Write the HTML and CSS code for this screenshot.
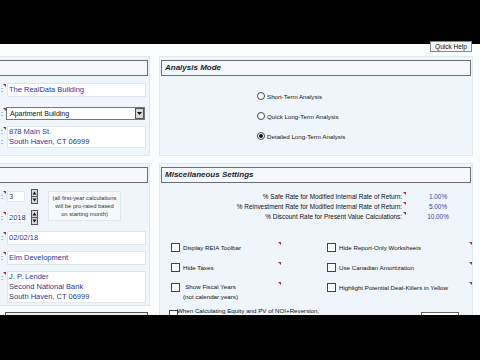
FILE: index.html
```html
<!DOCTYPE html>
<html>
<head>
<meta charset="utf-8">
<title>Settings</title>
<link rel="stylesheet" href="styles.css">
</head>
<body>
<div class="screen">
  <div class="bar bar-top"></div>
  <button class="quick-help">Quick Help</button>
  <main class="main">
    <div class="col col-left">
      <section class="panel panel-a">
        <div class="panel-head"></div>
        <div class="row row-name"><span class="lbl">:</span><div class="field">The RealData Building</div></div>
        <div class="row row-type"><span class="lbl">:</span>
          <div class="select"><span class="select-text">Apartment Building</span>
            <span class="select-btn"><svg width="9" height="11" viewBox="0 0 9 11"><rect x="0.5" y="0.5" width="8" height="10" fill="#d6d6d6" stroke="#555"/><path d="M2 4h5L4.5 7z" fill="#111"/></svg></span>
          </div>
        </div>
        <div class="row row-addr"><span class="lbl lbl-2">:<br>:</span><div class="field field-2">878 Main St.<br>South Haven, CT 06999</div></div>
      </section>
      <section class="panel panel-b">
        <div class="panel-head"></div>
        <div class="start">
          <div class="start-inputs">
            <div class="row row-num"><span class="lbl">:</span><span class="num">3</span>
              <span class="spin"><svg width="7" height="15" viewBox="0 0 7 15"><rect x="0.5" y="0.5" width="6" height="14" fill="#dadada" stroke="#555"/><line x1="0.5" y1="7.5" x2="6.5" y2="7.5" stroke="#555"/><path d="M1.5 5.5h4L3.5 2.5z M1.5 9.5h4L3.5 12.5z" fill="#111"/></svg></span>
            </div>
            <div class="row row-num"><span class="lbl">:</span><span class="num">2018</span>
              <span class="spin"><svg width="7" height="15" viewBox="0 0 7 15"><rect x="0.5" y="0.5" width="6" height="14" fill="#dadada" stroke="#555"/><line x1="0.5" y1="7.5" x2="6.5" y2="7.5" stroke="#555"/><path d="M1.5 5.5h4L3.5 2.5z M1.5 9.5h4L3.5 12.5z" fill="#111"/></svg></span>
            </div>
          </div>
          <div class="note">(all first-year calculations<br>will be pro-rated based<br>on starting month)</div>
        </div>
        <div class="row row-gap"><span class="lbl">:</span><div class="field">02/02/18</div></div>
        <div class="row row-gap"><span class="lbl">:</span><div class="field">Elm Development</div></div>
        <div class="row row-gap"><span class="lbl">:</span><div class="field field-3">J. P. Lender<br>Second National Bank<br>South Haven, CT 06999</div></div>
      </section>
      <div class="next-head"></div>
    </div>

    <div class="col col-right">
      <section class="panel panel-a">
        <div class="panel-head"><h2>Analysis Mode</h2></div>
        <div class="radios">
          <div class="radio"><span class="dot"></span><span>Short-Term Analysis</span></div>
          <div class="radio"><span class="dot"></span><span>Quick Long-Term Analysis</span></div>
          <div class="radio"><span class="dot on"></span><span>Detailed Long-Term Analysis</span></div>
        </div>
      </section>
      <section class="panel panel-b panel-tall">
        <div class="panel-head"><h2>Miscellaneous Settings</h2></div>
        <div class="rates">
          <span class="rate-lbl">% Safe Rate for Modified Internal Rate of Return:</span><span class="mark"></span><span class="rate-val">1.00%</span>
          <span class="rate-lbl">% Reinvestment Rate for Modified Internal Rate of Return:</span><span class="mark"></span><span class="rate-val">5.00%</span>
          <span class="rate-lbl">% Discount Rate for Present Value Calculations:</span><span class="mark"></span><span class="rate-val">10.00%</span>
        </div>
        <div class="checks">
          <div class="check"><span class="box"></span><span class="check-lbl">Display REIA Toolbar</span><span class="mark"></span></div>
          <div class="check"><span class="box"></span><span class="check-lbl">Hide Report-Only Worksheets</span><span class="mark"></span></div>
          <div class="check"><span class="box"></span><span class="check-lbl">Hide Taxes</span><span class="mark"></span></div>
          <div class="check"><span class="box"></span><span class="check-lbl">Use Canadian Amortization</span><span class="mark"></span></div>
          <div class="check"><span class="box"></span><span class="check-lbl"><span class="two">Show Fiscal Years<br>(not calendar years)</span></span><span class="mark"></span></div>
          <div class="check"><span class="box"></span><span class="check-lbl">Highlight Potential Deal-Killers in Yellow</span><span class="mark"></span></div>
          <div class="check check-wide"><span class="box"></span><span class="check-lbl">When Calculating Equity and PV of NOI+Reversion,</span><span class="wide-input"></span></div>
        </div>
      </section>
    </div>
  </main>
  <div class="bar bar-bottom"></div>
</div>
</body>
</html>
```

FILE: styles.css
```css
* { box-sizing: border-box; margin: 0; padding: 0; }
html, body { width: 480px; height: 360px; overflow: hidden; background: #000; }
body { font-family: "Liberation Sans", Arial, sans-serif; color: #111; }

.screen {
  position: relative;
  width: 480px;
  height: 360px;
  background: #fafcfe;
  display: flex;
  flex-direction: column;
  overflow: hidden;
}
.bar { background: #000; flex: none; }
.bar-top { height: 44px; }
.bar-bottom { height: 45px; }

.quick-help {
  position: absolute;
  top: 41px;
  left: 430px;
  width: 42px;
  height: 11px;
  border: 1px solid #8a8a8a;
  background: #f6f6f6;
  font: 6.5px/9px "Liberation Sans", Arial, sans-serif;
  color: #111;
}

.main {
  height: 271px;
  flex: none;
  overflow: hidden;
  display: flex;
  align-items: flex-start;
  gap: 9px;
  padding-top: 12px;
}
.col { display: flex; flex-direction: column; gap: 7px; flex: none; }
.col-left { width: 160px; margin-left: -10px; }
.col-right { width: 314px; }

.panel {
  flex: none;
  background: #eff5fa;
  border: 1px solid #e0e8ef;
  padding: 3px 1px 0 1px;
  overflow: hidden;
}
.col-left .panel { padding-left: 3px; }
.panel-a { height: 100px; }
.panel-b { height: 143px; }
.panel-tall { height: 170px; }

.panel-head {
  flex: none;
  height: 16px;
  border: 1px solid #6e6e6e;
  background: #f5f9fd;
}
.panel-head h2 {
  font: italic bold 8px/14px "Liberation Sans", Arial, sans-serif;
  color: #1c2433;
  padding-left: 3px;
}

/* left rows */
.row { display: flex; align-items: flex-start; padding-right: 2px; }
.lbl {
  position: relative;
  width: 12px;
  flex: none;
  font-size: 7px;
  line-height: 14px;
  text-align: right;
  white-space: nowrap;
  color: #222;
  padding-right: 3px;
}
.lbl::after {
  content: "";
  position: absolute;
  right: 0;
  top: 1px;
  border-top: 3px solid #b3263a;
  border-left: 3px solid transparent;
}
.lbl-2 { line-height: 10px; padding-top: 1px; }
.field {
  flex: 1;
  height: 14px;
  margin-left: 1px;
  background: #fff;
  border: 1px solid #dde6ef;
  color: #293a94;
  font: 7.5px/12px "Liberation Sans", Arial, sans-serif;
  padding-left: 1px;
  white-space: nowrap;
}
.field-2 { height: 22px; line-height: 10px; }
.field-3 { height: 32px; line-height: 10px; }
.row-name { margin-top: 7px; }
.row-type { margin-top: 10px; }
.row-addr { margin-top: 5px; }

.select {
  flex: 1;
  height: 13px;
  display: flex;
  align-items: center;
  justify-content: space-between;
  border: 1px solid #777;
  background: #fff;
  padding: 0 0 0 3px;
  margin-right: 1px;
}
.select-text { font-size: 7px; color: #111; }
.select-btn { display: flex; }

.start { display: flex; margin-top: 6px; }
.start-inputs { width: 54px; flex: none; display: flex; flex-direction: column; gap: 6px; }
.row-num { height: 15px; align-items: center; }
.num {
  width: 18px;
  height: 11px;
  margin-left: 1px;
  background: #fff;
  border: 1px solid #e2e9f0;
  color: #293a94;
  font-size: 7.5px;
  line-height: 9px;
  padding-left: 1px;
}
.spin { display: flex; margin-left: 6px; }
.note {
  width: 73px;
  height: 30px;
  margin-top: 2px;
  background: #f6f9fc;
  border: 1px solid #e0e7ee;
  font-size: 5.8px;
  line-height: 8px;
  text-align: center;
  color: #333;
  padding-top: 2px;
  white-space: nowrap;
}
.row-gap { margin-top: 6px; }
.next-head {
  flex: none;
  height: 12px;
  margin-top: -1px;
  margin-left: 15px;
  margin-right: 2px;
  border: 1px solid #555;
  background: #ececec;
}

/* right */
.radios { display: flex; flex-direction: column; margin-top: 10px; padding-left: 96px; }
.radio { height: 20px; display: flex; align-items: center; gap: 2px; font-size: 6.2px; color: #111; }
.dot {
  width: 8px; height: 8px;
  border: 1px solid #444;
  border-radius: 50%;
  background: #fff;
  display: flex; align-items: center; justify-content: center;
}
.dot.on::after { content: ""; width: 4px; height: 4px; border-radius: 50%; background: #111; }

.rates {
  display: grid;
  grid-template-columns: 1fr 8px 56px;
  margin-top: 9px;
  padding-right: 5px;
  font-size: 6.4px;
  line-height: 10px;
}
.rate-lbl { text-align: right; color: #111; white-space: nowrap; }
.rate-val { text-align: center; color: #3344b8; }
.mark { position: relative; }
.mark::after {
  content: "";
  position: absolute;
  left: 1px;
  top: 0;
  border-top: 3px solid #b3263a;
  border-left: 3px solid transparent;
}

.checks {
  display: grid;
  grid-template-columns: 110px 145px;
  column-gap: 46px;
  margin-top: 21px;
  padding-left: 10px;
}
.check { height: 20px; display: flex; align-items: flex-start; font-size: 6.2px; }
.box { width: 9px; height: 9px; border: 1px solid #444; background: #fff; flex: none; }
.check-lbl { flex: 1; line-height: 9px; padding-left: 3px; white-space: nowrap; color: #111; }
.check .mark { width: 4px; height: 9px; margin-top: -1px; }
.two { display: inline-block; text-align: center; line-height: 10px; margin-top: -1px; }
.check-wide { grid-column: 1 / -1; margin-left: -2px; margin-top: 3px; }
.check-wide .box { margin-top: 4px; }
.check-wide .check-lbl { flex: none; padding-left: 0; margin-left: -1px; margin-top: 0; }
.wide-input { width: 38px; height: 10px; margin-left: auto; margin-right: 13px; margin-top: 6px; border: 1px solid #666; background: #fff; }
```
